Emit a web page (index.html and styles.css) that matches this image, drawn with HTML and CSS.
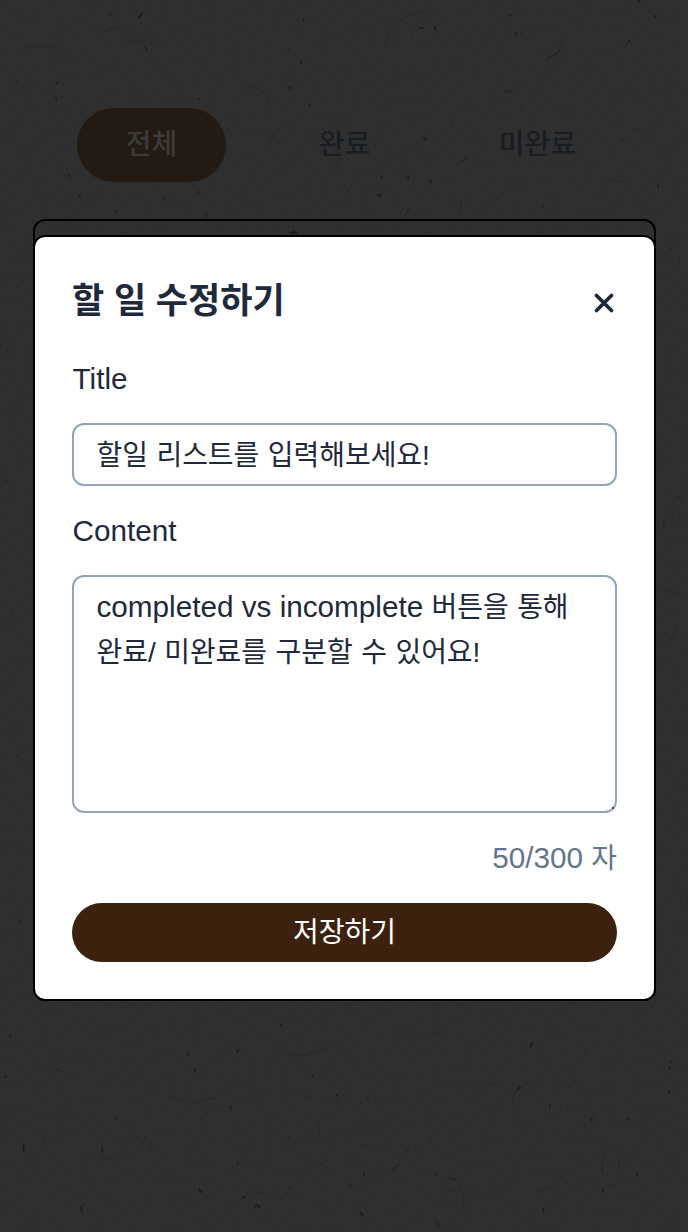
FILE: index.html
```html
<!DOCTYPE html>
<html lang="ko">
<head>
<meta charset="utf-8">
<title>할 일 수정하기</title>
<link rel="stylesheet" href="styles.css">
</head>
<body>
<main class="page">
  <svg class="paper" width="688" height="1232" viewBox="0 0 688 1232" aria-hidden="true">
    <filter id="grain" x="0" y="0" width="100%" height="100%">
      <feTurbulence type="fractalNoise" baseFrequency="0.4 0.22" numOctaves="3" seed="8"/>
      <feColorMatrix values="0 0 0 0 0  0 0 0 0 0  0 0 0 0 0  0.9 0 0 0 -0.38"/>
    </filter>
    <rect width="688" height="1232" filter="url(#grain)" opacity="0.16"/>
    <g transform="scale(.4388 .3333)">
      <path class="fibers" d="M40 160q18-30 50-18q40-22 70 32M232 100q30-30 62-8q30 20 42 62M302 122h28M880 140q-8-60 60-98l30-6M1284 102q0 30-10 54M1120 612q30-30 44-80M790 580q8-34 34-42M560 260q40-10 58 60M312 284l6 22M350 180q40 40 60 90M930 210q14 8 34 20M1370 543h52M760 520l20-70M1150 275l14-4"/>
      <path class="specks faint" d="M250 38l4 8M330 140l6 12M1246 174q14-4 28-20M1150 276l16-4M922 650l10-24M1064 472l-10 12M1050 610v18M1414 421h6M1424 140l8-14M470 640v14M372 594l4 6M162 668v4M1446 390v4M1030 362v4M616 408h10M1190 318v6M860 584l8 4M398 598v4M1188 96v6M1436 240v4M38 244v4M658 150v4"/>
      <path class="specks" d="M316 54l8-14M958 84h5M990 80l4 10M1456 2v4M1492 48v3M692 60v3M686 186v4M660 262v3M706 312v4M128 249h4M128 294v5M452 296v2M1176 100v3M1434 124v3M966 414l3 4M870 529v4M930 532v4M982 541v6M862 586h4M1236 617v3M1499 556v5M158 526v3M180 588l2 3M452 575v3M265 632v3M662 699l14-2M669 693v5M1166 46v2"/>
    </g>
    <g transform="translate(0 1020) scale(.4388 .3333)">
      <path class="fibers" d="M540 178q18 0 28 24l28 60M520 570l36-38q20-18 50-14M230 404q24 26 54 12M806 260l32-20M1104 206q6-18 26-12M380 226q30 20 60 22l50-16M1008 526q14-20 40-14q6-30-26-40M1168 250q-2-30 18-46M1370 450l8-60M1226 514q40-10 58-50M650 98q46 24 98-16M728 310v46M300 346l20 14M990 40h20l10-20M1490 110l20-16M724 426l26 20M1056 520v46M606 522l40 18M1520 440l14 14"/>
      <path class="specks faint" d="M836 240l4-4M896 448l14-14M1024 474l14 4M992 468l4-6M994 602l6 16M656 350l4 10M1372 446v8M1410 430v10M242 177v2M214 243v2M264 292l3 4M458 290v3M100 367h3M344 385v4M330 350v4M128 148h6M172 124v3M930 390v6M982 356v4M1390 496h4M1436 412v4M1310 182v4M1336 102v4M364 464v3M700 232v4M832 374v3"/>
      <path class="specks" d="M640 13v5M23 49v2M13 170v2M54 375v16M233 384v9M184 562l3 14M524 260l2 5M542 428v5M768 224v4M1180 207l5-5M1212 70l-3 10M1254 254v5M1348 294v7M1430 295v4M829 460v6M660 503v3M454 508l6 8M552 532h5M580 560l6-5l5 6M822 578l4 8M1238 568v4M1452 461v4M1374 511v4M1525 212v4M1526 142v3M1528 124v2M541 95l2-4M428 101v3M444 148v3M798 495v3M712 166v2"/>
    </g>
    <path class="specks faint" d="M675 246v1M670 249h1M678 261h2M685 444v2M678 496l3 3M664 522v2M664 525v2M680 519v2M672 638v2M22 280v2M8 349v2M20 920v2M12 610v2M18 755v2M6 480v2"/>
    <path class="fibers" d="M657 646l11-4q8-4 8-14M663 588q7 7 16 5M665 541l6 7"/>
  </svg>

  <nav class="tabs">
    <span class="tab tab-active">전체</span>
    <span class="tab">완료</span>
    <span class="tab tab-wide">미완료</span>
  </nav>

  <section class="card">
    <div class="modal" role="dialog" aria-labelledby="modal-title">
      <header class="modal-head">
        <h1 class="modal-title" id="modal-title">할 일 수정하기</h1>
        <svg class="close" width="22" height="22" viewBox="0 0 22 22" role="button" aria-label="close"><path d="M3.500 3.500L18.500 18.500M18.500 3.500L3.500 18.500"/></svg>
      </header>
      <div class="label">Title</div>
      <div class="field input"><span class="ko">할일 리스트를 입력해보세요!</span></div>
      <div class="label">Content</div>
      <div class="field textarea">completed vs incomplete <span class="ko">버튼을 통해</span><br><span class="ko">완료/ 미완료를 구분할 수 있어요!</span><i class="resizer"></i></div>
      <div class="count">50/300 <span class="ko">자</span></div>
      <div class="save"><span class="ko">저장하기</span></div>
    </div>
  </section>
</main>
</body>
</html>
```

FILE: styles.css
```css
* { box-sizing: border-box; }
body {
  margin: 0;
  background: #303030;
  color: #1e293b;
  font: 29.7px/44px "Liberation Sans", "Noto Sans CJK KR", sans-serif;
}
.page { position: relative; width: 688px; height: 1232px; overflow: hidden; padding-top: 108px; }
.paper { position: absolute; left: 0; top: 0; }
.fibers { fill: none; stroke: #222; stroke-width: 1; opacity: .45; vector-effect: non-scaling-stroke; }
.specks { fill: none; stroke: #151515; stroke-width: 2; stroke-linecap: round; opacity: .7; vector-effect: non-scaling-stroke; }
.faint { stroke-width: 1.5; opacity: .4; }
.tabs { position: relative; display: flex; gap: 44px; padding-left: 77px; height: 111px; }
.tab {
  width: 149px; height: 74px; border-radius: 37px;
  font-size: 28px; line-height: 74px; text-align: center; font-weight: 500;
  color: #181c23;
}
.tab-active { background: #221a13; color: #3d3b39; }
.card { position: relative; width: 623px; height: 782px; margin-left: 33px; border: 2px solid #000; border-radius: 12px; padding-top: 14px; }
.modal {
  width: 623px; height: 766px; margin-left: -2px; padding: 37px 37px 0;
  background: #fff; border: 2px solid #000; border-radius: 12px;
}
.modal-head { display: flex; justify-content: space-between; height: 83px; }
.modal-title { margin: 0; font-size: 35px; line-height: 54px; font-weight: 700; }
.close { margin: 18px 2px 0 0; fill: none; stroke: #1e293b; stroke-width: 3.8; stroke-linecap: round; }
.label { height: 66px; padding-left: 0.5px; }
.field { width: 545px; border: 2px solid #94a3b8; border-radius: 12px; padding-left: 22.5px; }
.input { height: 63px; line-height: 60px; margin-bottom: 23px; }
.ko { font-size: 28px; letter-spacing: -0.05px; word-spacing: 0.8px; }
.textarea { position: relative; height: 238px; padding-top: 8px; }
.resizer { position: absolute; right: 1px; bottom: 2px; width: 2px; height: 2px; background: #444; }
.count { height: 67px; margin-top: 23px; text-align: right; color: #64748b; }
.save { width: 545px; height: 59px; border-radius: 30px; background: #3c220e; color: #fff; text-align: center; line-height: 58px; }
```
